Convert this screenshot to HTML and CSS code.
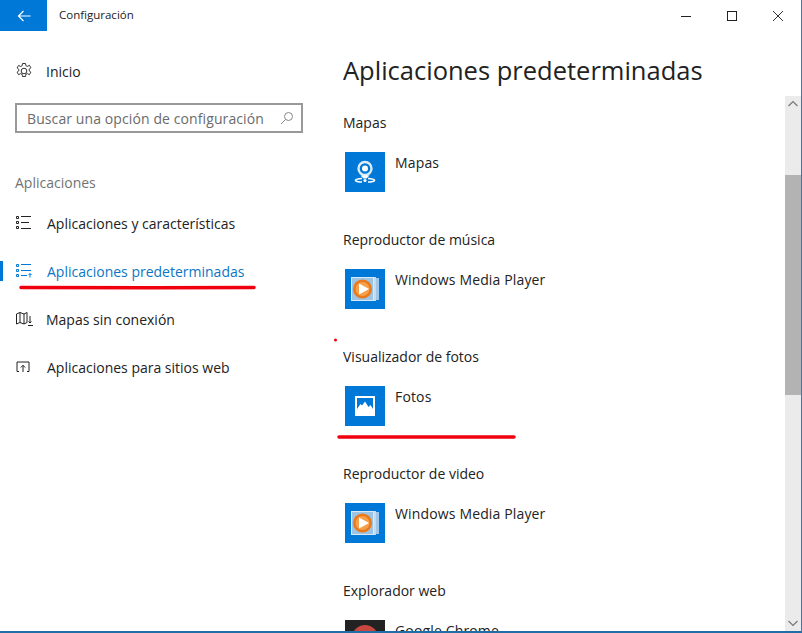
FILE: index.html
```
<!DOCTYPE html>
<html lang="es">
<head>
<meta charset="utf-8">
<title>Configuración</title>
<link rel="stylesheet" href="styles.css">
</head>
<body>
<div class="window">
  <header class="titlebar">
    <button class="back" aria-label="Atrás">
      <svg width="14" height="12" viewBox="0 0 14 12"><path d="M13.500 6H1.500M6.500 1 1.500 6l5 5" fill="none" stroke="#fff" stroke-width="1.200"/></svg>
    </button>
    <span class="title">Configuración</span>
    <div class="controls">
      <svg width="12" height="12" viewBox="0 0 12 12"><path d="M1 6.500h10" stroke="#222" stroke-width="1"/></svg>
      <svg width="12" height="12" viewBox="0 0 12 12"><rect x="1.500" y="1.500" width="9" height="9" fill="none" stroke="#222" stroke-width="1"/></svg>
      <svg width="12" height="12" viewBox="0 0 12 12"><path d="M1 1l10 10M11 1 1 11" stroke="#333" stroke-width="1"/></svg>
    </div>
  </header>
  <div class="body">
    <nav class="side">
      <div class="home">
        <svg width="18" height="18" viewBox="0 0 18 18"><circle cx="9" cy="9" r="2.800" fill="none" stroke="#333" stroke-width="1"/><path d="M7.500 1.500h3l.4 2.200 1.500.7 2-1.100 1.500 2.500-1.700 1.400v1.600l1.700 1.400-1.500 2.500-2-1.100-1.500.7-.4 2.200h-3l-.4-2.200-1.500-.7-2 1.100-1.500-2.500 1.700-1.400V7.300L2.100 5.900l1.500-2.500 2 1.100 1.500-.7z" fill="none" stroke="#333" stroke-width="1"/></svg>
        <span>Inicio</span>
      </div>
      <div class="search">
        <span>Buscar una opción de configuración</span>
        <svg width="14" height="14" viewBox="0 0 14 14"><circle cx="8.500" cy="5.500" r="4" fill="none" stroke="#888" stroke-width="1"/><path d="M5.500 8.500 1 13" stroke="#888" stroke-width="1"/></svg>
      </div>
      <div class="group">Aplicaciones</div>
      <ul class="menu">
        <li class="item">
          <svg width="18" height="16" viewBox="0 0 18 16"><path d="M1.500 1.500h2v2h-2zM1.500 6.500h2v2h-2zM1.500 11.500h2v2h-2z" fill="none" stroke="#222" stroke-width="1"/><path d="M6 1.500h10M6 7.500h8M6 13.500h10" stroke="#222" stroke-width="1"/></svg>
          <span>Aplicaciones y características</span>
        </li>
        <li class="item active">
          <svg width="18" height="16" viewBox="0 0 18 16"><path d="M1.500 1.500h2v2h-2zM1.500 6.500h2v2h-2zM1.500 11.500h2v2h-2z" fill="none" stroke="#0078d7" stroke-width="1"/><path d="M6 1.500h10M6 7.500h10M6 12.500h6M15 14.500v-4M13.500 12l1.500-1.500 1.500 1.500" fill="none" stroke="#0078d7" stroke-width="1"/></svg>
          <span>Aplicaciones predeterminadas</span>
        </li>
        <li class="item tight">
          <svg width="18" height="16" viewBox="0 0 18 16"><path d="M1.500 3 5 1.500l4 1.500 3-1.500v10l-3 1.500-4-1.500L1.500 13zM5 1.500v10M9 3v10" fill="none" stroke="#222" stroke-width="1"/><path d="M15 5v7M13.500 10.500l1.500 1.500 1.500-1.500M13 14.500h5" fill="none" stroke="#222" stroke-width="1"/></svg>
          <span>Mapas sin conexión</span>
        </li>
        <li class="item">
          <svg width="18" height="16" viewBox="0 0 18 16"><path d="M4 12.500H2V3h12v9.500h-2" fill="none" stroke="#222" stroke-width="1"/><path d="M8 13V6.500M5.800 8.500 8 6.300l2.200 2.200" fill="none" stroke="#222" stroke-width="1"/></svg>
          <span>Aplicaciones para sitios web</span>
        </li>
      </ul>
    </nav>
    <main class="content">
      <h1>Aplicaciones predeterminadas</h1>
      <section class="block">
        <h2>Mapas</h2>
        <div class="app">
          <span class="tile">
            <svg width="40" height="40" viewBox="0 0 40 40"><circle cx="20" cy="16.500" r="6.500" fill="none" stroke="#dcecf8" stroke-width="2.400"/><circle cx="20" cy="16.500" r="3" fill="#fff"/><path d="M15.500 23.500h9l-3 3h-3z" fill="#fff"/><path d="M17 26.500c-3 .2-6 .6-6.500 1.500-.5 1.200 3 2 6.500 2M23 26.500c3 .2 6 .6 6.500 1.500.5 1.200-3 2-6.500 2" fill="none" stroke="#fff" stroke-width="1.500"/><circle cx="20" cy="28.500" r="1.600" fill="#fff"/></svg>
          </span>
          <span class="name">Mapas</span>
        </div>
      </section>
      <section class="block">
        <h2>Reproductor de música</h2>
        <div class="app">
          <span class="tile">
            <svg width="40" height="40" viewBox="0 0 40 40"><use href="#wmp"/></svg>
          </span>
          <span class="name">Windows Media Player</span>
        </div>
      </section>
      <section class="block">
        <h2>Visualizador de fotos</h2>
        <div class="app">
          <span class="tile">
            <svg width="40" height="40" viewBox="0 0 40 40"><rect x="10" y="10" width="20" height="20" fill="#fff"/><path d="M12 12h16v11l-2.500-4-2 2-3.500-5.500-3 4-1.500-1.500-3.500 5z" fill="#0078d7"/></svg>
          </span>
          <span class="name">Fotos</span>
        </div>
      </section>
      <section class="block">
        <h2>Reproductor de video</h2>
        <div class="app">
          <span class="tile">
            <svg width="40" height="40" viewBox="0 0 40 40"><use href="#wmp"/></svg>
          </span>
          <span class="name">Windows Media Player</span>
        </div>
      </section>
      <section class="block">
        <h2>Explorador web</h2>
        <div class="app">
          <span class="tile dark">
            <svg width="40" height="40" viewBox="0 0 40 40"><circle cx="20" cy="18" r="13" fill="#c8483f"/></svg>
          </span>
          <span class="name">Google Chrome</span>
        </div>
      </section>
    </main>
    <div class="scrollbar">
      <svg class="arrow" width="16" height="16" viewBox="0 0 16 16"><path d="M3.500 10 8 5.500 12.500 10" fill="none" stroke="#777" stroke-width="1.200"/></svg>
      <div class="track"><div class="thumb"></div></div>
      <svg class="arrow" width="16" height="16" viewBox="0 0 16 16"><path d="M3.500 6 8 10.500 12.500 6" fill="none" stroke="#777" stroke-width="1.200"/></svg>
    </div>
  </div>
  <svg class="marks" width="802" height="633" viewBox="0 0 802 633">
    <path d="M21 287.500C90 288 180 288 254 287.500" fill="none" stroke="#f0000f" stroke-width="3.500" stroke-linecap="round"/>
    <path d="M339 437C400 437.500 460 437.500 514 437" fill="none" stroke="#f0000f" stroke-width="3.500" stroke-linecap="round"/>
    <circle cx="335.500" cy="340" r="1.500" fill="#f0000f"/>
  </svg>
</div>
<svg class="defs" width="0" height="0">
  <defs>
    <g id="wmp">
      <path d="M31 9h3v22h-3z" fill="#9fc6e8"/>
      <path d="M28 8h3v24h-3z" fill="#c3dcf0"/>
      <rect x="6" y="8" width="23" height="24" fill="#dbe9f5"/>
      <rect x="7" y="9" width="21" height="22" fill="#9cc4e4"/>
      <circle cx="17.500" cy="20" r="9.500" fill="#e8791c"/>
      <circle cx="17.500" cy="20" r="7" fill="#f6a04a"/>
      <path d="M14 14.500 24 20l-10 5.500z" fill="#fff"/>
    </g>
  </defs>
</svg>
</body>
</html>
```
FILE: styles.css
```
* { box-sizing: border-box; }
html, body { margin: 0; height: 100%; overflow: hidden; background: #fff; }
body { font-family: "Open Sans", "Noto Sans", "Liberation Sans", sans-serif; color: #1a1a1a; }
.window { position: relative; width: 802px; height: 633px; display: flex; flex-direction: column; border-right: 1px solid #2b7cc4; border-bottom: 2px solid #1f6ea8; overflow: hidden; }
.titlebar { flex: none; height: 31px; display: flex; align-items: center; }
.back { width: 47px; height: 31px; border: 0; padding: 0; background: #0078d7; display: flex; align-items: center; justify-content: center; }
.title { margin-left: 12px; font-size: 11.500px; color: #222; position: relative; top: -1px; }
.controls { margin-left: auto; margin-right: 17px; display: flex; gap: 34px; align-items: center; }
.body { flex: 1; display: flex; min-height: 0; }
.side { flex: none; width: 343px; display: flex; flex-direction: column; padding-top: 29px; }
.home { display: flex; align-items: center; height: 22px; padding-left: 15px; gap: 13px; font-size: 14px; color: #222; }
.search { margin: 21px 0 0 15px; width: 288px; height: 30px; border: 2px solid #999; display: flex; align-items: center; justify-content: space-between; padding: 0 7px 0 10px; font-size: 14px; letter-spacing: 0.1px; color: #6b6b6b; }
.group { margin: 40px 0 0 15px; font-size: 14px; color: #737373; line-height: 20px; }
.menu { list-style: none; margin: 10px 0 0; padding: 0; display: flex; flex-direction: column; gap: 8px; }
.item { position: relative; height: 40px; display: flex; align-items: center; padding-left: 15px; gap: 14px; font-size: 14px; color: #222; }
.item.tight { gap: 13px; }
.item.active { color: #0b76c4; }
.item.active::before { content: ""; position: absolute; left: 0; top: 10px; width: 3px; height: 20px; background: #0078d7; }
.content { flex: 1; min-width: 0; overflow: hidden; padding-top: 21px; }
h1 { margin: 0; font-size: 25.500px; font-weight: 400; line-height: 36px; color: #222; }
.block { height: 117px; }
h1 + .block { margin-top: 25px; }
h2 { margin: 0; font-size: 14px; font-weight: 400; line-height: 20px; color: #222; }
.app { display: flex; gap: 10px; margin: 19px 0 0 2px; }
.tile { flex: none; width: 40px; height: 40px; background: #0078d7; display: block; }
.tile svg { display: block; }
.tile.dark { background: #222; }
.name { font-size: 14px; letter-spacing: 0.15px; line-height: 20px; margin-top: 1px; color: #222; }
.scrollbar { flex: none; width: 16px; margin-top: 65px; background: #ebebeb; display: flex; flex-direction: column; }
.arrow { display: block; flex: none; }
.track { flex: 1; }
.thumb { height: 220px; margin-top: 63px; background: #b3b3b3; }
.marks { position: absolute; left: 0; top: 0; pointer-events: none; }
.defs { position: absolute; }
```
